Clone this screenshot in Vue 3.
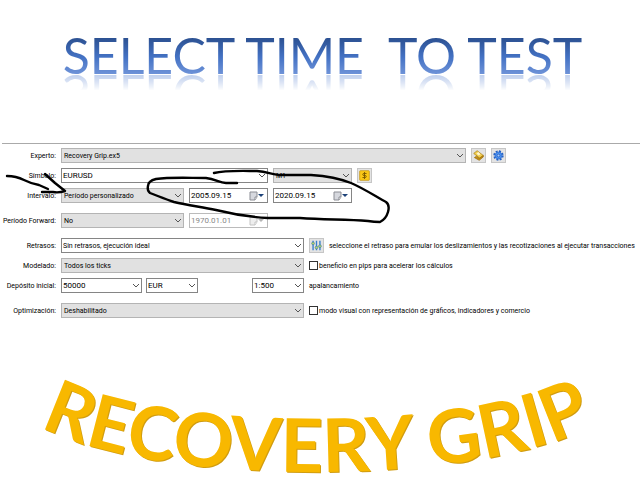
<template>
  <main class="page">
    <h1 class="title">SELECT TIME&nbsp; TO TEST</h1>

    <form class="tester" @submit.prevent>
      <div class="row">
        <label class="row-label" for="expert">Experto:</label>
        <div class="combo combo-expert">
          <select id="expert" v-model="settings.expert" class="filled">
            <option>Recovery Grip.ex5</option>
          </select>
          <svg class="chevron" viewBox="0 0 8 6"><path d="M1 1l3 3 3-3" /></svg>
        </div>
        <button type="button" class="icon-btn" aria-label="Abrir experto">
          <svg viewBox="0 0 16 16">
            <path d="M1 5l5-4 9 7-5 4z" fill="#f2cf4e" stroke="#a87b12" />
            <path d="M2 11l3-2 4 3 6-4v2l-6 5z" fill="#c58f10" stroke="#94690b" />
            <path d="M5 5l3-2 3 3-3 2z" fill="#fff6cf" />
          </svg>
        </button>
        <button type="button" class="icon-btn" aria-label="Ajustes">
          <svg viewBox="0 0 16 16">
            <circle cx="8" cy="8" r="6" fill="none" stroke="#2461c4" stroke-width="3" stroke-dasharray="2.8 1.9" />
            <circle cx="8" cy="8" r="5" fill="#4b91ef" stroke="#2767cf" />
            <circle cx="8" cy="8" r="2" fill="#a9cbf8" stroke="#1c55b8" />
          </svg>
        </button>
      </div>

      <div class="row">
        <label class="row-label" for="symbol">Símbolo:</label>
        <div class="combo combo-symbol">
          <select id="symbol" v-model="settings.symbol" class="editable">
            <option>EURUSD</option>
          </select>
          <svg class="chevron" viewBox="0 0 8 6"><path d="M1 1l3 3 3-3" /></svg>
        </div>
        <div class="combo combo-date">
          <select v-model="settings.period" class="filled" aria-label="Período">
            <option>M1</option>
          </select>
          <svg class="chevron" viewBox="0 0 8 6"><path d="M1 1l3 3 3-3" /></svg>
        </div>
        <button type="button" class="icon-btn" aria-label="Especificación del símbolo">
          <svg viewBox="0 0 16 16">
            <rect x="1" y="1" width="14" height="14" rx="1" fill="#fcc917" stroke="#c28e00" />
            <path d="M11 5H7a1.5 1.5 0 0 0 0 3h2a1.5 1.5 0 0 1 0 3H5M8 3v10" fill="none" stroke="#7b5900" stroke-width="1.4" />
          </svg>
        </button>
      </div>

      <div class="row">
        <label class="row-label" for="interval">Intervalo:</label>
        <div class="combo combo-interval">
          <select id="interval" v-model="settings.interval" class="filled">
            <option>Período personalizado</option>
          </select>
          <svg class="chevron" viewBox="0 0 8 6"><path d="M1 1l3 3 3-3" /></svg>
        </div>
        <div v-for="key in ['from', 'to']" :key="key" class="date">
          <input v-model="settings[key]" type="text" :aria-label="key === 'from' ? 'Desde' : 'Hasta'" />
          <button type="button" class="date-btn" aria-label="Calendario">
            <svg viewBox="0 0 15 10">
              <path d="M1 1h7v5L6 9H1z" fill="#d6d8de" stroke="#8b8d94" />
              <path d="M8 6H6v3" fill="#fff" stroke="#8b8d94" />
              <path d="M9 3h6l-3 3z" fill="#1e4379" />
            </svg>
          </button>
        </div>
      </div>

      <div class="row group">
        <label class="row-label" for="forward">Período Forward:</label>
        <div class="combo combo-interval">
          <select id="forward" v-model="settings.forward" class="filled">
            <option>No</option>
          </select>
          <svg class="chevron" viewBox="0 0 8 6"><path d="M1 1l3 3 3-3" /></svg>
        </div>
        <div class="date disabled">
          <input v-model="settings.forwardDate" type="text" aria-label="Fecha forward" disabled />
          <button type="button" class="date-btn" aria-label="Calendario" disabled>
            <svg viewBox="0 0 15 10">
              <path d="M1 1h7v5L6 9H1z" fill="#eee" stroke="#c4c4c4" />
              <path d="M8 6H6v3" fill="#fff" stroke="#c4c4c4" />
              <path d="M9 3h6l-3 3z" fill="#b5b5b5" />
            </svg>
          </button>
        </div>
      </div>

      <div class="row group">
        <label class="row-label" for="delays">Retrasos:</label>
        <div class="combo combo-wide">
          <select id="delays" v-model="settings.delays">
            <option>Sin retrasos, ejecución ideal</option>
          </select>
          <svg class="chevron" viewBox="0 0 8 6"><path d="M1 1l3 3 3-3" /></svg>
        </div>
        <button type="button" class="icon-btn" aria-label="Configurar retrasos">
          <svg viewBox="0 0 16 16">
            <path d="M3 1v14M8 1v14M13 1v14" stroke="#377fce" stroke-width="2" />
            <circle cx="3" cy="5" r="2" fill="#b7dd68" stroke="#477f9e" />
            <circle cx="8" cy="11" r="2" fill="#b7dd68" stroke="#477f9e" />
            <circle cx="13" cy="9" r="2" fill="#b7dd68" stroke="#477f9e" />
          </svg>
        </button>
        <span class="hint">seleccione el retraso para emular los deslizamientos y las recotizaciones al ejecutar transacciones</span>
      </div>

      <div class="row">
        <label class="row-label" for="model">Modelado:</label>
        <div class="combo combo-wide">
          <select id="model" v-model="settings.model" class="filled">
            <option>Todos los ticks</option>
          </select>
          <svg class="chevron" viewBox="0 0 8 6"><path d="M1 1l3 3 3-3" /></svg>
        </div>
        <label class="check">
          <input v-model="settings.pips" type="checkbox" />
          beneficio en pips para acelerar los cálculos
        </label>
      </div>

      <div class="row">
        <label class="row-label" for="deposit">Depósito inicial:</label>
        <div class="deposit">
          <div class="combo combo-deposit">
            <select id="deposit" v-model="settings.deposit" class="editable">
              <option>50000</option>
            </select>
            <svg class="chevron" viewBox="0 0 8 6"><path d="M1 1l3 3 3-3" /></svg>
          </div>
          <div class="combo combo-small">
            <select v-model="settings.currency" class="editable" aria-label="Divisa">
              <option>EUR</option>
            </select>
            <svg class="chevron" viewBox="0 0 8 6"><path d="M1 1l3 3 3-3" /></svg>
          </div>
          <div class="combo combo-small leverage">
            <select id="leverage" v-model="settings.leverage" class="editable">
              <option>1:500</option>
            </select>
            <svg class="chevron" viewBox="0 0 8 6"><path d="M1 1l3 3 3-3" /></svg>
          </div>
        </div>
        <label class="hint" for="leverage">apalancamiento</label>
      </div>

      <div class="row group">
        <label class="row-label" for="optimization">Optimización:</label>
        <div class="combo combo-wide">
          <select id="optimization" v-model="settings.optimization" class="filled">
            <option>Deshabilitado</option>
          </select>
          <svg class="chevron" viewBox="0 0 8 6"><path d="M1 1l3 3 3-3" /></svg>
        </div>
        <label class="check">
          <input v-model="settings.visual" type="checkbox" />
          modo visual con representación de gráficos, indicadores y comercio
        </label>
      </div>

      <!-- Hand-drawn marks over the date range -->
      <svg class="marks" width="400" height="90" viewBox="0 0 400 90">
        <path d="M7 32Q16 32 24 36T39 41L48 45M45 30L55 39L65 47Q59 49 53 48L42 48" />
        <path d="M214 29C226 26 245 27 257 27C268 28 274 31 281 31H311C326 32 341 35 351 39C365 45 378 54 386 58Q390 61 388 68Q386 75 380 78Q374 78 368 77C345 75 325 76 300 74H268C249 73 232 70 216 66C201 63 188 61 174 58C165 55 158 52 150 49Q147 47 148 42Q148 37 156 35C170 33 188 34 206 34C216 35 219 39 226 39H237" />
      </svg>
    </form>

    <svg class="banner" viewBox="0 0 640 110" role="img" aria-label="RECOVERY GRIP">
      <path id="arc" d="M40 61C150 122 482 124 600 57" fill="none" />
      <text><textPath href="#arc">RECOVERY GRIP</textPath></text>
    </svg>
  </main>
</template>

<script setup>
import { reactive } from 'vue'

const settings = reactive({
  expert: 'Recovery Grip.ex5',
  symbol: 'EURUSD',
  period: 'M1',
  interval: 'Período personalizado',
  from: '2005.09.15',
  to: '2020.09.15',
  forward: 'No',
  forwardDate: '1970.01.01',
  delays: 'Sin retrasos, ejecución ideal',
  model: 'Todos los ticks',
  pips: false,
  deposit: '50000',
  currency: 'EUR',
  leverage: '1:500',
  optimization: 'Deshabilitado',
  visual: false
})
</script>

<style>
body {
  margin: 0;
  background: #fff;
}
</style>

<style scoped>
.page {
  padding-top: 33px;
  overflow: hidden;
  font-family: Roboto, "Liberation Sans", sans-serif;
}

.title {
  width: fit-content;
  margin: 0 auto;
  padding-left: 5px;
  font: 400 50px/44px Lato, sans-serif;
  white-space: nowrap;
  color: transparent;
  background: linear-gradient(#2c5192 12%, #4472c4 55%, #7598db);
  background-clip: text;
  -webkit-box-reflect: below -5px linear-gradient(transparent 58%, rgba(0, 0, 0, 0.5));
}

.tester {
  position: relative;
  margin: 66px 0 0 2px;
  padding-top: 4px;
  border-top: 1px solid #aaa;
  font-size: 7px;
  line-height: 16px;
  color: #000;
}

.row {
  display: flex;
  gap: 5px;
  height: 15px;
  margin-bottom: 5px;
}

.row.group {
  margin-top: 10px;
}

.row-label {
  display: flex;
  flex: 0 0 54px;
  justify-content: flex-end;
  min-width: 0;
  white-space: nowrap;
}

.combo {
  position: relative;
  min-width: 0;
}

.combo-expert { flex: 0 1 405px; }
.combo-symbol { flex: 0 1 207px; }
.combo-interval { flex: 0 1 123px; }
.combo-date { flex: 0 1 79px; }
.combo-wide { flex: 0 0 243px; }
.combo-deposit { flex: 0 0 81px; }
.combo-small { flex: 0 0 52px; }

select {
  display: block;
  box-sizing: border-box;
  width: 100%;
  height: 15px;
  padding: 1px 12px 0 1px;
  border: 1px solid #858585;
  border-radius: 0;
  background: #fff;
  color: #000;
  font: inherit;
  line-height: 13px;
  appearance: none;
}

select.editable {
  padding-top: 0;
  font-size: 8px;
}

select.filled {
  padding-left: 2px;
  border-color: #b4b4b4;
  background: #e1e1e1;
}

.chevron {
  position: absolute;
  top: 5px;
  right: 2px;
  width: 8px;
  height: 6px;
  fill: none;
  stroke: #555;
  pointer-events: none;
}

.icon-btn {
  flex: 0 0 15px;
  height: 15px;
  padding: 1px;
  border: 1px solid #c6c6c6;
  background: #e3e3e3;
}

.icon-btn svg {
  display: block;
  width: 11px;
  height: 11px;
}

.date {
  display: flex;
  flex: 0 1 79px;
  box-sizing: border-box;
  min-width: 0;
  height: 15px;
  border: 1px solid #858585;
}

.date input {
  flex: 1;
  width: 0;
  min-width: 0;
  padding: 0 1px;
  border: 0;
  background: none;
  color: #000;
  font: inherit;
  font-size: 8px;
}

.date-btn {
  display: flex;
  align-items: center;
  padding: 0 3px 0 0;
  border: 0;
  background: none;
}

.date-btn svg {
  width: 15px;
  height: 10px;
}

.date.disabled {
  border-color: #bbb;
}

.date.disabled input {
  color: #888;
}

.deposit {
  display: flex;
  flex: 0 0 243px;
  gap: 4px;
}

.leverage {
  margin-left: auto;
}

.hint,
.check {
  white-space: nowrap;
}

.check {
  display: flex;
  align-items: center;
  gap: 1px;
}

.check input {
  box-sizing: border-box;
  width: 9px;
  height: 9px;
  margin: 0;
  border: 1px solid #333;
  background: #fff;
  appearance: none;
}

.check input:checked {
  background: #333;
}

.marks {
  position: absolute;
  top: 0;
  left: -2px;
  fill: none;
  stroke: #000;
  stroke-width: 2.4;
  stroke-linecap: round;
  stroke-linejoin: round;
  pointer-events: none;
}

.banner {
  display: block;
  width: 100%;
  margin-top: 47px;
}

.banner text {
  font: 700 74px Lato, sans-serif;
  fill: #f8b800;
  filter: drop-shadow(1px 1px 0 #d09c10);
}
</style>
